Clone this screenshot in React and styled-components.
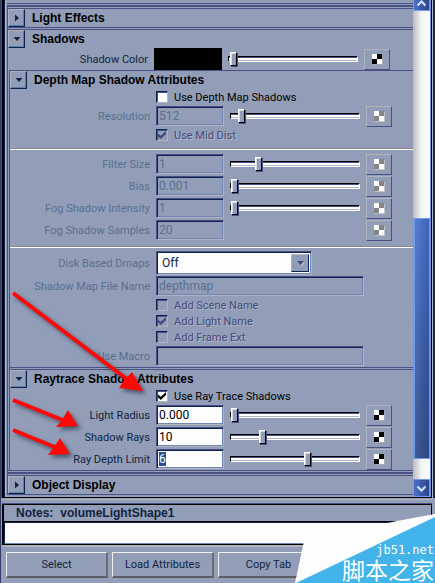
import { useEffect, useRef } from "react"
import styled, { createGlobalStyle } from "styled-components"

const noop = () => {}

const Checker = ({ disabled, label }) => (
  <MapButton type="button" disabled={disabled} aria-label={`Map ${label}`}>
    <svg width="11" height="11" viewBox="0 0 11 11" shapeRendering="crispEdges">
      <rect x="1" y="1" width="10" height="10" fill={disabled ? "#c4c4c4" : "#a8abb4"} />
      <rect width="10" height="10" fill="#fff" />
      <rect x="5" width="5" height="5" fill={disabled ? "#848484" : "#000"} />
      <rect y="5" width="5" height="5" fill={disabled ? "#848484" : "#000"} />
    </svg>
  </MapButton>
)

const NumberRow = ({ id, label, value, slider, disabled, inputRef }) => (
  <Row>
    <Label htmlFor={id} $disabled={disabled}>{label}</Label>
    <Field id={id} ref={inputRef} defaultValue={value} disabled={disabled} />
    {slider === undefined ? (
      <span />
    ) : (
      <Slider type="range" aria-label={`${label} slider`} min="0" max="100" defaultValue={slider} />
    )}
    <Checker disabled={disabled} label={label} />
  </Row>
)

const CheckRow = ({ label, checked, disabled }) => (
  <CheckLine>
    <CheckLabel $disabled={disabled}>
      <Check type="checkbox" defaultChecked={checked} disabled={disabled} />
      {label}
    </CheckLabel>
  </CheckLine>
)

const Header = ({ title, open }) => (
  <SectionHeader>
    <Toggle type="button" aria-expanded={!!open} aria-label={title}>
      <svg width="8" height="8" viewBox="0 0 8 8">
        <path d={open ? "M0.5 2H7.5L4 6Z" : "M2 0.5V7.5L6 4Z"} fill="#10243e" />
      </svg>
    </Toggle>
    <h2>{title}</h2>
  </SectionHeader>
)

const Chevron = ({ up }) => (
  <svg width="9" height="7" viewBox="0 0 9 7">
    <path d={up ? "M0.5 5.5L4.5 1.5L8.5 5.5" : "M0.5 1.5L4.5 5.5L8.5 1.5"} fill="none" stroke="#d5e2ff" strokeWidth="2" />
  </svg>
)

const AttributeEditor = () => {
  const depthLimit = useRef(null)

  useEffect(() => {
    depthLimit.current.select()
  }, [])

  return (
    <Window>
      <GlobalStyle />
      <Pane>
        <Attributes>
          <PreviousSection />
          <Section>
            <Header title="Light Effects" />
          </Section>
          <Section>
            <Header title="Shadows" open />
            <Row>
              <Label as="span">Shadow Color</Label>
              <Swatch type="button" aria-label="Shadow Color" />
              <Slider type="range" aria-label="Shadow Color slider" defaultValue="1" />
              <Checker label="Shadow Color" />
            </Row>
            <SubSection $first>
              <Header title="Depth Map Shadow Attributes" open />
              <CheckRow label="Use Depth Map Shadows" />
              <NumberRow id="resolution" label="Resolution" value="512" slider="6" disabled />
              <CheckRow label="Use Mid Dist" checked disabled />
              <Divider />
              <NumberRow id="filter" label="Filter Size" value="1" slider="20" disabled />
              <NumberRow id="bias" label="Bias" value="0.001" slider="0" disabled />
              <NumberRow id="fogIntensity" label="Fog Shadow Intensity" value="1" slider="0" disabled />
              <NumberRow id="fogSamples" label="Fog Shadow Samples" value="20" disabled />
              <Divider />
              <WideRow $tall>
                <Label htmlFor="dmaps" $disabled>Disk Based Dmaps</Label>
                <SelectWrapper>
                  <Select id="dmaps" value="Off" onChange={noop}>
                    <option>Off</option>
                  </Select>
                  <SelectArrow>
                    <svg width="9" height="7" viewBox="0 0 9 7">
                      <path d="M2 2H9L5.5 6Z" fill="#c0c4d0" />
                      <path d="M1 1H8L4.5 5Z" fill="#454a7d" />
                    </svg>
                  </SelectArrow>
                </SelectWrapper>
              </WideRow>
              <WideRow>
                <Label htmlFor="fileName" $disabled>Shadow Map File Name</Label>
                <Field id="fileName" defaultValue="depthmap" disabled />
              </WideRow>
              <CheckRow label="Add Scene Name" disabled />
              <CheckRow label="Add Light Name" checked disabled />
              <CheckRow label="Add Frame Ext" disabled />
              <WideRow>
                <Label htmlFor="macro" $disabled>Use Macro</Label>
                <Field id="macro" disabled />
              </WideRow>
            </SubSection>
            <SubSection>
              <Header title="Raytrace Shadow Attributes" open />
              <CheckRow label="Use Ray Trace Shadows" checked />
              <NumberRow id="radius" label="Light Radius" value="0.000" slider="0" />
              <NumberRow id="rays" label="Shadow Rays" value="10" slider="23" />
              <NumberRow id="depth" label="Ray Depth Limit" value="6" slider="60" inputRef={depthLimit} />
            </SubSection>
            <SectionEnd />
          </Section>
          <Section>
            <Header title="Object Display" />
          </Section>
        </Attributes>
        <ScrollTrack>
          <ScrollButton type="button" aria-label="Scroll up" $clipped><Chevron up /></ScrollButton>
          <TrackSpace $grow={207} />
          <ScrollThumb />
          <TrackSpace $grow={20} />
          <ScrollButton type="button" aria-label="Scroll down"><Chevron /></ScrollButton>
        </ScrollTrack>
      </Pane>

      <Notes>
        <NotesLabel htmlFor="notes">
          <span>Notes:</span>
          <span>volumeLightShape1</span>
        </NotesLabel>
        <NotesText id="notes" />
      </Notes>

      <Actions>
        <ActionButton type="button">Select</ActionButton>
        <ActionButton type="button">Load Attributes</ActionButton>
        <ActionButton type="button">Copy Tab</ActionButton>
        <ActionButton type="button" aria-label="Close" />
      </Actions>

      <Arrows width="200" height="470" viewBox="0 0 200 470">
        <g fill="none" stroke="#ff0808" strokeWidth="4">
          <path d="M12 293L127 380" />
          <path d="M12 400L64 421" />
          <path d="M12 430L56 448" />
        </g>
        <g fill="#ff0808">
          <path d="M142 391L131 372L124 379L118 388Z" />
          <path d="M77 426L67 410L61 420L55 427Z" />
          <path d="M69 454L59 438L53 447L47 455Z" />
        </g>
      </Arrows>

      <Watermark>
        <svg width="140" height="70" viewBox="0 0 140 70">
          <path d="M140 1L102 8L9 28L0 70H140Z" fill="#fdfdfd" />
          <path d="M140 4L1 70H140Z" fill="#42b4e9" />
        </svg>
        <WatermarkText>
          <small>jb51.net</small>
          <b>脚本之家</b>
        </WatermarkText>
      </Watermark>
    </Window>
  )
}

const GlobalStyle = createGlobalStyle`
  * {
    box-sizing: border-box;
  }

  body {
    --face: #929eb8;
    --line: #4a5084;
    --light: #b0b4be;
    --navy: #0a2450;
    --text: #10243e;
    --muted: #58708e;
    margin: 0;
    overflow: hidden;
    background: var(--face);
  }

  body, button, input, select, textarea {
    font-family: Roboto, "Liberation Sans", sans-serif;
    font-size: 11px;
  }
`

const Window = styled.main`
  position: relative;
  display: flex;
  flex-direction: column;
  height: 100vh;
  overflow: hidden;
  border-left: 1px solid #343a68;
  color: var(--text);
`

const Pane = styled.div`
  display: flex;
  flex: 1;
  min-height: 0;
  margin-left: 1px;
  border: solid #000;
  border-width: 0 1px 1px 2px;
  margin-right: 3px;
  box-shadow: 1px 0 var(--light), 3px 0 #20264a, -1px 0 var(--line);
`

const Attributes = styled.div`
  flex: 1;
  min-width: 0;
  overflow: hidden;
  border-left: 1px solid var(--navy);
  box-shadow: inset 1px 0 var(--light);
  padding-left: 2px;
`

const PreviousSection = styled.div`
  height: 6px;
  border-bottom: 3px double var(--line);
`

const Section = styled.section`
  border-top: 3px double var(--line);
  border-left: 1px solid var(--line);

  &:last-child {
    border-bottom: 1px solid var(--line);
  }
`

const SubSection = styled.section`
  margin-left: 1px;
  border-left: 1px solid var(--line);
  border-top: ${(props) => (props.$first ? "1px solid" : "3px double")} var(--line);
`

const SectionEnd = styled.div`
  border-top: 3px double var(--line);
`

const SectionHeader = styled.div`
  display: flex;
  align-items: center;
  gap: 7px;
  height: 18px;

  h2 {
    margin: 0;
    font-family: "Liberation Sans", Arial, sans-serif;
    font-size: 12px;
    line-height: 18px;
    font-weight: 700;
    color: #000;
    white-space: nowrap;
  }
`

const Toggle = styled.button`
  display: flex;
  align-items: center;
  justify-content: center;
  width: 17px;
  height: 18px;
  padding: 0;
  background: var(--face);
  border: 1px solid;
  border-color: var(--light) var(--navy) var(--navy) var(--light);
  box-shadow: inset -1px -1px #5f7fa8;
`

const Row = styled.div`
  display: grid;
  grid-template-columns: 140px 68px minmax(40px, 130px) 26px;
  column-gap: 6px;
  align-items: center;
  height: 22px;
`

const WideRow = styled(Row)`
  grid-template-columns: 140px minmax(68px, ${(props) => (props.$tall ? "156px" : "208px")});
  height: ${(props) => (props.$tall ? "24px" : "22px")};
`

const Label = styled.label`
  text-align: right;
  white-space: nowrap;
  color: ${(props) => (props.$disabled ? "var(--muted)" : "var(--text)")};
`

const Field = styled.input`
  width: 100%;
  height: 20px;
  padding: 0 2px;
  border: 1px solid;
  border-color: var(--line) var(--light) var(--light) var(--line);
  border-radius: 0;
  box-shadow: inset 1px 1px var(--navy), inset -1px -1px #7086b4;
  background: #fdfdfd;
  color: #000;
  font-size: 12px;
  outline: none;

  &:disabled {
    background: var(--face);
    color: var(--muted);
  }

  &::selection {
    background: #2c5090;
    color: #fff;
  }
`

const Slider = styled.input`
  appearance: none;
  width: 100%;
  height: 14px;
  margin: 0;
  background: transparent;

  &::-webkit-slider-runnable-track {
    height: 6px;
    background: linear-gradient(#fff 3px, var(--light) 3px);
    border: 1px solid;
    border-color: #000 #fff #fff #000;
    box-shadow: inset 0 1px var(--line);
  }

  &::-webkit-slider-thumb {
    appearance: none;
    width: 7px;
    height: 14px;
    margin-top: -5px;
    background: var(--face);
    border: 1px solid;
    border-color: #fff #000 #000 #fff;
    box-shadow: inset 1px 1px #d8dae0, 1px 1px var(--line);
  }
`

const MapButton = styled.button`
  display: flex;
  align-items: center;
  justify-content: center;
  width: 26px;
  height: 21px;
  padding: 0;
  background: var(--face);
  border: 1px solid;
  border-color: var(--light) var(--line) var(--line) var(--light);
`

const Swatch = styled.button`
  height: 22px;
  padding: 0;
  border: 0;
  background: #000;
`

const CheckLine = styled.div`
  display: flex;
  align-items: center;
  height: 16px;
  padding-left: 146px;
`

const CheckLabel = styled.label`
  display: flex;
  align-items: center;
  gap: 6px;
  white-space: nowrap;
  color: ${(props) => (props.$disabled ? "#454a7d" : "#000")};
  text-shadow: ${(props) => (props.$disabled ? "1px 1px #b0b6c6" : "none")};
`

const Check = styled.input`
  appearance: none;
  display: grid;
  place-items: center;
  width: 12px;
  height: 12px;
  margin: 0;
  background: #fff;
  border: 1px solid;
  border-color: var(--navy) var(--light) var(--light) var(--navy);
  box-shadow: inset 1px 1px var(--line);

  &:disabled {
    background: var(--face);
  }

  &:checked::before {
    content: "";
    width: 8px;
    height: 8px;
    background: #000;
    clip-path: polygon(0 30%, 35% 60%, 100% 0, 100% 38%, 35% 100%, 0 68%);
  }

  &:checked:disabled::before {
    background: #454a7d;
  }
`

const Divider = styled.div`
  height: 2px;
  margin: 5px 0 3px;
  border-top: 1px solid #8a8a8e;
  border-bottom: 1px solid #fff;
`

const SelectWrapper = styled.div`
  display: grid;
  grid-template-columns: 1fr 18px;
  height: 24px;
  padding: 2px;
  background: #fdfdfd;
  border: 1px solid;
  border-color: var(--line) var(--light) var(--light) var(--line);
  box-shadow: inset 1px 1px var(--navy), inset -1px -1px #7086b4;
`

const Select = styled.select`
  grid-area: 1 / 1 / 2 / 3;
  appearance: none;
  padding: 0 3px;
  border: 0;
  background: transparent;
  color: var(--text);
  font-size: 12px;
  outline: none;
`

const SelectArrow = styled.span`
  grid-area: 1 / 2;
  display: flex;
  align-items: center;
  justify-content: center;
  background: var(--face);
  border: 1px solid;
  border-color: var(--light) var(--navy) var(--navy) var(--light);
  pointer-events: none;
`

const ScrollTrack = styled.div`
  display: flex;
  flex-direction: column;
  width: 18px;
  background: linear-gradient(90deg, #bcbcbe, #f4f4f4 50%, #fdfdfd);
  border-right: 1px solid #6a90e0;
`

const ScrollButton = styled.button`
  display: flex;
  align-items: center;
  justify-content: center;
  flex: none;
  height: ${(props) => (props.$clipped ? "11px" : "18px")};
  padding: ${(props) => (props.$clipped ? "0 0 4px" : "0")};
  background: linear-gradient(90deg, #4a72cc, #2c4484);
  border: 1px solid #6f9af0;
  border-top-width: ${(props) => (props.$clipped ? "0" : "1px")};
`

const TrackSpace = styled.div`
  flex: ${(props) => props.$grow} 1 0;
`

const ScrollThumb = styled.div`
  flex: 240 1 0;
  background: linear-gradient(90deg, rgba(255, 255, 255, 0.05), rgba(10, 20, 70, 0.2)), linear-gradient(#4b78d2, #35508f);
  border: 1px solid #6f9af0;
  border-left-width: 2px;
`

const Notes = styled.div`
  display: flex;
  flex-direction: column;
  margin: 6px 3px 0 1px;
  border: 1px solid #000;
  border-left-width: 2px;
  box-shadow: 0 -1px var(--line), 0 -4px var(--face), 0 -5px var(--light), 0 2px var(--light);
`

const NotesLabel = styled.label`
  display: flex;
  gap: 7px;
  height: 17px;
  padding-left: 12px;
  border-bottom: 1px solid #000;
  font-family: "Liberation Sans", Arial, sans-serif;
  font-size: 12px;
  line-height: 16px;
  font-weight: 700;
`

const NotesText = styled.textarea`
  height: 22px;
  padding: 2px;
  resize: none;
  overflow: hidden;
  background: #fdfdfd;
  border: 1px solid;
  border-color: var(--navy) var(--line) #7086b4 var(--navy);
  border-radius: 0;
  outline: none;
`

const Actions = styled.div`
  display: grid;
  grid-template-columns: repeat(4, 102px);
  gap: 4px;
  padding: 7px 5px 5px;
`

const ActionButton = styled.button`
  height: 26px;
  padding: 0;
  background: var(--face);
  color: var(--text);
  border: 2px solid;
  border-width: 1px 2px 2px 1px;
  border-color: #f0f0ee #6c6c72 #5c5c60 #f0f0ee;
`

const Arrows = styled.svg`
  position: absolute;
  top: 0;
  left: 0;
  pointer-events: none;
  filter: drop-shadow(3px 3px 2px rgba(20, 25, 45, 0.55));
`

const Watermark = styled.div`
  position: absolute;
  right: 0;
  bottom: 0;
  pointer-events: none;

  svg {
    display: block;
  }
`

const WatermarkText = styled.div`
  position: absolute;
  right: 1px;
  bottom: 2px;
  display: flex;
  flex-direction: column;
  align-items: flex-end;
  color: #fff;

  small {
    font: 12px/14px "DejaVu Sans Mono", monospace;
  }

  b {
    font: 400 23px/24px "Noto Sans CJK SC", sans-serif;
    white-space: nowrap;
  }
`

export default AttributeEditor
